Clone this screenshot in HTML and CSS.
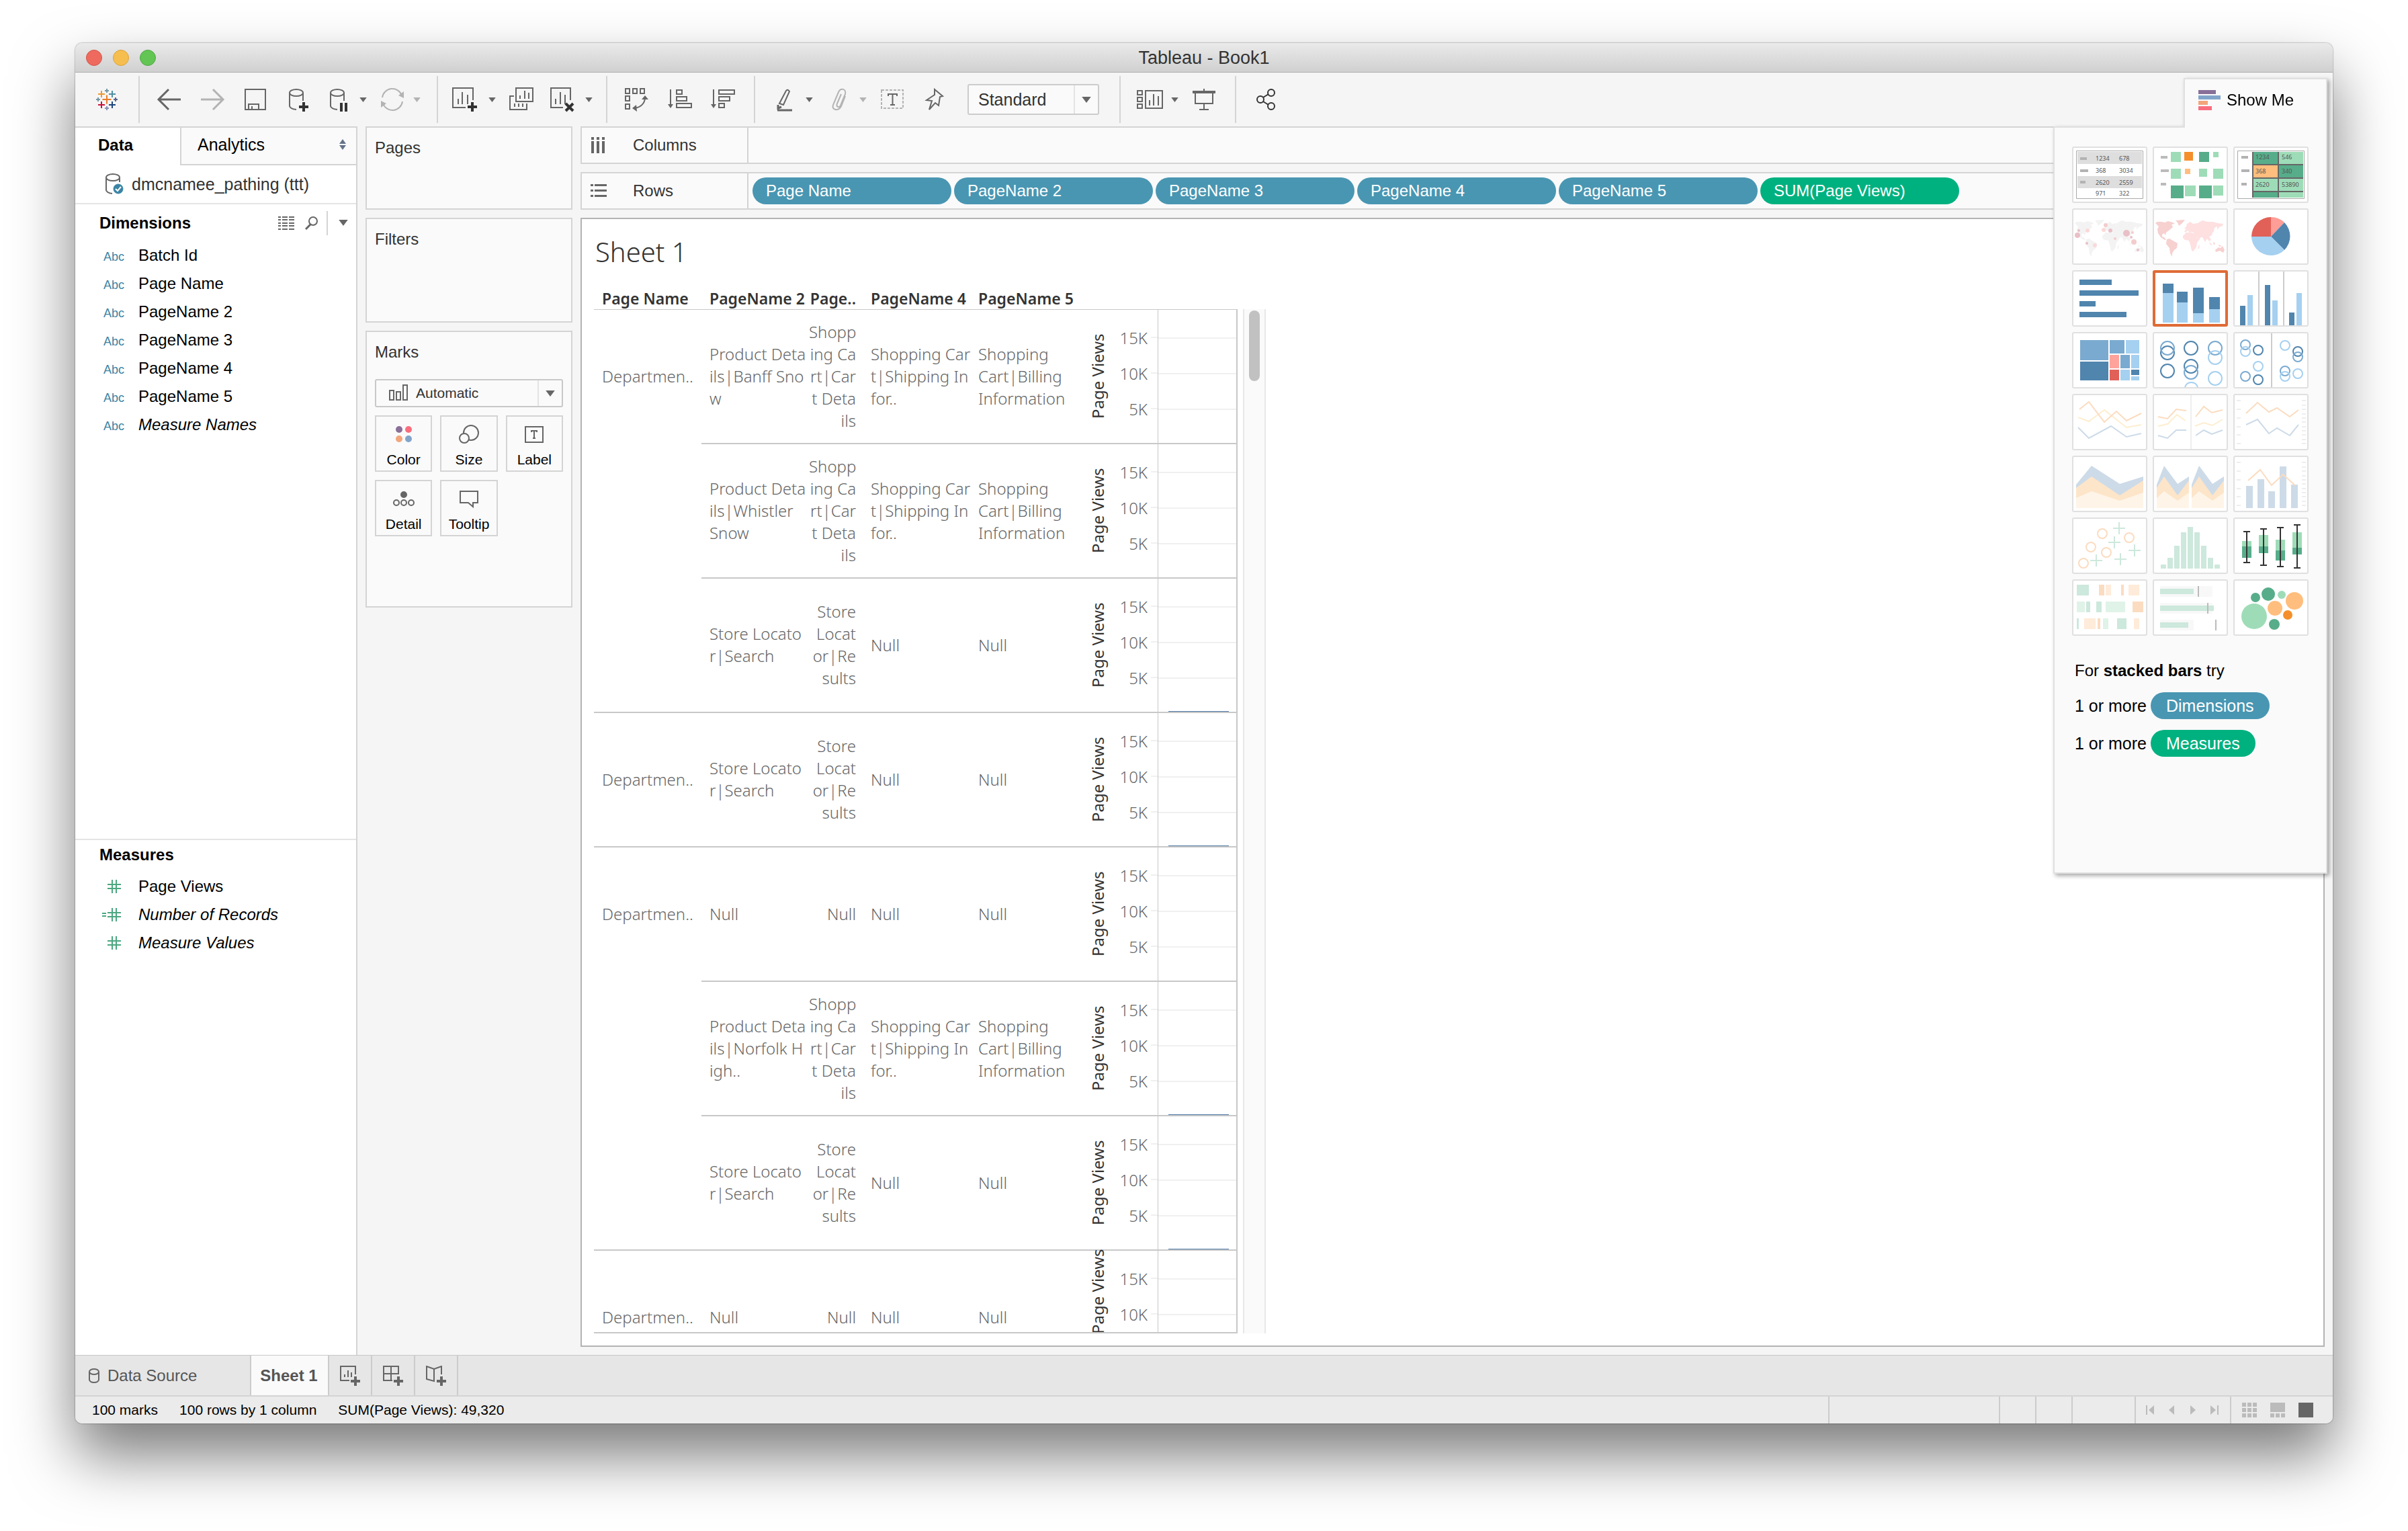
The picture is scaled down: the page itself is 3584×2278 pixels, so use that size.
FILE: index.html
```html
<!DOCTYPE html>
<html lang="en">
<head>
<meta charset="utf-8">
<title>Tableau - Book1</title>
<link rel="stylesheet" href="styles.css">
</head>
<body>
<svg class="defs" aria-hidden="true">
  <symbol id="caret" viewBox="0 0 12 8"><path d="M0 0H12L6 8Z" fill="currentColor"/></symbol>
  <symbol id="hash" viewBox="0 0 32 20"><path d="M19 0V20M25 0V20M12 7H32M12 13H32" stroke="#4aa77f" stroke-width="2" fill="none"/></symbol>
  <symbol id="world" viewBox="0 0 112 84">
    <path class="west" d="M4 22L7 20L13 20L18 21L23 19L30 21L33 23L28 24L30 28L24 33L20 36L19 40L17 37L14 39L14 42L17 43L20 47L18 47L12 43L8 37L7 31L9 27L6 24ZM34 18L48 17L44 22L39 26L37 21ZM21 46L25 45L30 48L37 52L36 59L32 62L29 67L29 72L26 67L25 59L20 53Z"/>
    <path class="east" d="M45 41L50 36L57 36L64 38L66 43L70 46L66 51L65 58L60 64L58 63L56 54L54 48L48 47L45 44ZM68 56L70 54L69 60L67 60ZM47 34L50 31L47 30L50 27L51 23L56 20L60 23L67 22L74 18L81 20L89 20L97 22L105 23L104 26L99 28L96 32L96 27L92 29L91 34L89 36L88 40L84 42L87 47L84 49L81 45L78 50L74 43L72 43L69 46L65 41L62 37L58 35L55 36L52 33L49 36Z"/>
    <path class="west" d="M84 50L89 55L86 54ZM90 50L93 52L91 55ZM97 54L103 56L100 57ZM93 62L98 58L101 59L104 56L107 62L105 66L100 63L94 65Z"/>
  </symbol>
  <symbol id="ticks" viewBox="0 0 112 84"><path stroke="#eee" stroke-width="2" d="M5 10h6M5 23h6M5 36h6M5 49h6M5 61h6M5 74h6M102 10h6M102 17h6M102 23h6M102 30h6M102 36h6M102 42h6M102 49h6M102 55h6M102 61h6M102 68h6M102 74h6"/></symbol>
</svg>

<div class="window">
  <header class="titlebar">
    <div class="lights"><button class="red" aria-label="Close"></button><button class="yellow" aria-label="Minimize"></button><button class="green" aria-label="Zoom"></button></div>
    <h1>Tableau - Book1</h1>
  </header>

  <div class="toolbar" role="toolbar">
    <div class="tools logo">
      <button aria-label="Start page"><svg class="icon" viewBox="0 0 40 40" fill="none" stroke-width="2"><path stroke="#eb7c29" d="M20 13.500V26.500M13.500 20H26.500"/><path stroke="#ec9a30" d="M12 7V17M7 12H17"/><path stroke="#4e8fa5" d="M28 7V17M23 12H33"/><path stroke="#c8123c" d="M12 23V33M7 28H17"/><path stroke="#1e447f" d="M28 23V33M23 28H33"/><path stroke="#7199a6" d="M20 4V10M17 7H23M7 17V23M4 20H10"/><path stroke="#5b6591" d="M33 17V23M30 20H36"/><path stroke="#8a8fb5" d="M20 30V36M17 33H23"/></svg></button>
    </div>
    <div class="tools g1">
      <button aria-label="Undo"><svg class="icon" viewBox="0 0 40 40"><path stroke-width="3" d="M19 5L4 20L19 35M4 20H37"/></svg></button>
      <button aria-label="Redo" class="off"><svg class="icon" viewBox="0 0 40 40"><path stroke-width="3" d="M21 5L36 20L21 35M36 20H3"/></svg></button>
      <button aria-label="Save"><svg class="icon" viewBox="0 0 40 40"><path d="M5 5H35V35H5ZM10 35V27H25V35M15 35V30"/></svg></button>
      <button aria-label="New data source"><svg class="icon" viewBox="0 0 40 40"><ellipse cx="17" cy="10" rx="10" ry="5"/><path d="M7 10V30Q8 34 17 35M27 10V22"/><path class="ink" d="M28 24V38M21 31H35"/></svg></button>
      <button aria-label="Pause auto updates" class="tight"><svg class="icon" viewBox="0 0 40 40"><ellipse cx="18" cy="10" rx="10" ry="5"/><path d="M8 10V30Q9 34 18 35M28 10V22"/><path class="ink" d="M24 25V38M31 25V38"/></svg></button>
      <button aria-label="Pause options" class="drop"><svg><use href="#caret"/></svg></button>
      <button aria-label="Refresh" class="tight off"><svg class="icon" viewBox="0 0 40 40"><path d="M5 17A15 15 0 0 1 34 14M35 23A15 15 0 0 1 6 26"/><path class="fill" d="M37 8V18L29 14ZM3 32V22L11 26Z"/></svg></button>
      <button aria-label="Refresh options" class="drop off"><svg><use href="#caret"/></svg></button>
    </div>
    <div class="tools g2">
      <button aria-label="New worksheet"><svg class="icon" viewBox="0 0 40 40"><path d="M21 32H2V3H32V21M10 19V27M16 9V27M24 13V27"/><path class="ink" d="M31 24V38M24 31H38"/></svg></button>
      <button aria-label="New worksheet options" class="drop"><svg><use href="#caret"/></svg></button>
      <button aria-label="Duplicate sheet" class="tight"><svg class="icon" viewBox="0 0 40 40"><path d="M12 3H37V23H12ZM18 14V19M25 7V19M31 10V19M9 15H3V35H28V26M10 26V31M16 26V31M22 26V31"/></svg></button>
      <button aria-label="Clear sheet"><svg class="icon" viewBox="0 0 40 40"><path d="M22 32H4V3H33V21M11 19V27M18 9V27M25 13V27"/><path class="ink" d="M26 26L37 37M37 26L26 37"/></svg></button>
      <button aria-label="Clear options" class="drop"><svg><use href="#caret"/></svg></button>
    </div>
    <div class="tools g3">
      <button aria-label="Swap rows and columns"><svg class="icon" viewBox="0 0 40 40"><path d="M3 4H9V11H3ZM14 4H20V11H14ZM25 4H31V11H25ZM3 15H9V22H3ZM3 27H9V34H3ZM32 18Q31 30 17 33"/><path class="fill" d="M27 20L32 14L37 20ZM19 28L13 33L20 38Z"/></svg></button>
      <button aria-label="Sort ascending"><svg class="icon" viewBox="0 0 40 40"><path d="M6 5V31M15 6H23V12H15ZM15 16H30V22H15ZM15 26H37V32H15Z"/><path class="fill" d="M2 27H10L6 33Z"/></svg></button>
      <button aria-label="Sort descending"><svg class="icon" viewBox="0 0 40 40"><path d="M6 5V31M14 6H37V12H14ZM14 16H30V22H14ZM14 26H22V32H14Z"/><path class="fill" d="M2 27H10L6 33Z"/></svg></button>
    </div>
    <div class="tools g4">
      <button aria-label="Highlight" class="tight"><svg class="icon" viewBox="0 0 40 40"><path d="M22 7Q24 4 27 8L18 28L12 26Z"/><path stroke-width="3" d="M9 36H31M10 28V33L15 31"/></svg></button>
      <button aria-label="Highlight options" class="drop"><svg><use href="#caret"/></svg></button>
      <button aria-label="Group members" class="tight off"><svg class="icon" viewBox="0 0 40 40"><path d="M30 15L24 30C20 38 9 36 12 28L20 9C23 2 32 4 30 12L23 29C21 33 16 31 18 26L24 12"/></svg></button>
      <button aria-label="Group options" class="drop off"><svg><use href="#caret"/></svg></button>
      <button aria-label="Show mark labels" class="tight"><svg class="icon" viewBox="0 0 40 40"><path stroke="#b3b3b3" stroke-dasharray="4 2" d="M4 6H36V33H4Z"/><path d="M14 15V12H27V15M20.500 12V28M17 28H24"/></svg></button>
      <button aria-label="Fix axes"><svg class="icon" viewBox="0 0 40 40"><path d="M23 5L35 15L31 16L29 29L24 25L15 35L19 22L11 21L23 13Z"/></svg></button>
      <div class="select fit"><select aria-label="Fit"><option>Standard</option></select><span class="chev"><svg><use href="#caret"/></svg></span></div>
    </div>
    <div class="tools g5">
      <button aria-label="Show or hide cards" class="tight"><svg class="icon" viewBox="0 0 40 40"><path d="M1 7H8V13H1ZM1 17H8V23H1ZM1 27H8V33H1ZM13 7H38V33H13ZM19 21V29M25 12V29M32 15V29"/></svg></button>
      <button aria-label="Card options" class="drop"><svg><use href="#caret"/></svg></button>
      <button aria-label="Presentation mode" class="tight"><svg class="icon" viewBox="0 0 40 40"><path stroke-width="4" d="M3 9H37"/><path d="M20 4V8M7 10V26H33V10M20 26V35M13 35H27"/></svg></button>
    </div>
    <div class="tools g6">
      <button aria-label="Share" class="tight"><svg class="icon dark" viewBox="0 0 40 40"><circle cx="12" cy="20" r="5"/><circle cx="28" cy="10" r="5"/><circle cx="28" cy="30" r="5"/><path d="M16 17L24 12M16 23L24 28"/></svg></button>
    </div>
  </div>

  <div class="work">
    <nav class="data-pane">
      <div class="pane-tabs"><button class="active">Data</button><button class="analytics">Analytics<svg viewBox="0 0 12 16"><path fill="#66738a" d="M1 7L6 0L11 7ZM1 9L6 16L11 9Z"/></svg></button></div>
      <div class="source"><svg viewBox="0 0 28 32" fill="none" stroke="#666" stroke-width="2"><ellipse cx="12" cy="6" rx="10" ry="5"/><path d="M2 6V25Q3 29 11 30M22 6V13"/><circle cx="20" cy="23" r="7" fill="#3a84a5" stroke="#3a84a5" stroke-width="1"/><path stroke="#fff" d="M16 23L19 26L24 20"/></svg><a href="#">dmcnamee_pathing (ttt)</a></div>
      <section class="dims">
        <div class="dims-head"><h2>Dimensions</h2>
          <button aria-label="View data"><svg width="26" height="20"><path stroke="#666" stroke-width="2" stroke-dasharray="4 2 8 2 8 2" d="M0 1H24M0 5H24M0 10H24M0 14H24M0 19H24"/></svg></button>
          <button aria-label="Find field"><svg width="20" height="20" fill="none" stroke="#666" stroke-width="2"><circle cx="12" cy="7" r="6"/><path stroke-width="3" d="M8 12L1 19"/></svg></button>
          <button aria-label="Options" class="more"><svg><use href="#caret"/></svg></button>
        </div>
        <ul class="fields">
          <li><span class="abc">Abc</span>Batch Id</li>
          <li><span class="abc">Abc</span>Page Name</li>
          <li><span class="abc">Abc</span>PageName 2</li>
          <li><span class="abc">Abc</span>PageName 3</li>
          <li><span class="abc">Abc</span>PageName 4</li>
          <li><span class="abc">Abc</span>PageName 5</li>
          <li class="auto"><span class="abc">Abc</span>Measure Names</li>
        </ul>
      </section>
      <section class="measures">
        <h2>Measures</h2>
        <ul class="fields">
          <li><svg class="num"><use href="#hash"/></svg>Page Views</li>
          <li class="auto"><svg class="num" viewBox="0 0 32 20"><path d="M4 8H10M4 12H10" stroke="#4aa77f" stroke-width="2"/><use href="#hash" width="32" height="20"/></svg>Number of Records</li>
          <li class="auto"><svg class="num"><use href="#hash"/></svg>Measure Values</li>
        </ul>
      </section>
    </nav>

    <div class="cards">
      <section class="card pages"><h2>Pages</h2></section>
      <section class="card filters"><h2>Filters</h2></section>
      <section class="card marks"><h2>Marks</h2>
        <div class="select mark-type"><svg class="bars" viewBox="0 0 28 24" fill="none" stroke="#666" stroke-width="2"><path d="M1 9H7V23H1ZM11 11H17V23H11ZM21 1H27V23H21Z"/></svg><select aria-label="Mark type"><option>Automatic</option></select><span class="chev"><svg><use href="#caret"/></svg></span></div>
        <div class="mark-grid">
          <button><svg viewBox="0 0 32 28"><circle cx="9" cy="7" r="5" fill="#8a6f98"/><circle cx="23" cy="7" r="5" fill="#f96e7e"/><circle cx="9" cy="21" r="5" fill="#f3a57c"/><circle cx="23" cy="21" r="5" fill="#82a4c9"/></svg>Color</button>
          <button><svg viewBox="0 0 32 28" fill="none" stroke="#666" stroke-width="2"><circle cx="19" cy="12" r="11"/><circle cx="9" cy="20" r="7" fill="#fafafa"/></svg>Size</button>
          <button><svg viewBox="0 0 32 28" fill="none" stroke="#666" stroke-width="2"><path d="M3 3H29V26H3ZM12 11V9H20V11M16 9V20M14 20H18"/></svg>Label</button>
          <button><svg viewBox="0 0 32 28" fill="none" stroke="#666" stroke-width="2"><circle cx="16" cy="8" r="4" fill="#666"/><circle cx="5" cy="20" r="4"/><circle cx="16" cy="20" r="4"/><circle cx="27" cy="20" r="4"/></svg>Detail</button>
          <button><svg viewBox="0 0 32 28" fill="none" stroke="#666" stroke-width="2"><path d="M3 3H29V20H22V26L15 20H3Z"/></svg>Tooltip</button>
        </div>
      </section>
    </div>

    <main class="main">
      <div class="shelf"><h2><svg width="22" height="24" fill="#666"><path d="M1 0h4v4H1ZM9 0h4v4H9ZM17 0h4v4H17ZM1 6h4v18H1ZM9 6h4v18H9ZM17 6h4v18H17Z"/></svg>Columns</h2></div>
      <div class="shelf"><h2><svg width="24" height="22" fill="#666"><path d="M0 1h4v3H0ZM0 9h4v3H0ZM0 17h4v3H0ZM6 1h18v3H6ZM6 9h18v3H6ZM6 17h18v3H6Z"/></svg>Rows</h2>
        <button class="pill">Page Name</button><button class="pill">PageName 2</button><button class="pill">PageName 3</button><button class="pill">PageName 4</button><button class="pill">PageName 5</button><button class="pill green">SUM(Page Views)</button>
      </div>
      <section class="sheet">
        <h2>Sheet 1</h2>
        <div class="view">
          <div class="clip">
          <table>
            <colgroup><col class="w160"><col class="w160"><col class="w80"><col class="w160"><col class="w160"><col class="w119"><col></colgroup>
            <thead><tr><th>Page Name</th><th>PageName 2</th><th class="r">Page..</th><th>PageName 4</th><th>PageName 5</th><th></th><th></th></tr></thead>
            <tbody>
              <tr><td>Departmen..</td><td>Product Deta<br>ils|Banff Sno<br>w</td><td class="r">Shopp<br>ing Ca<br>rt|Car<br>t Deta<br>ils</td><td>Shopping Car<br>t|Shipping In<br>for..</td><td>Shopping<br>Cart|Billing<br>Information</td><td class="ax"><div><b>Page Views</b><ul><li>15K</li><li>10K</li><li>5K</li></ul></div></td><td class="plot"><svg><path d="M0 42H117M0 95H117M0 148H117"/></svg></td></tr>
              <tr><td></td><td>Product Deta<br>ils|Whistler<br>Snow</td><td class="r">Shopp<br>ing Ca<br>rt|Car<br>t Deta<br>ils</td><td>Shopping Car<br>t|Shipping In<br>for..</td><td>Shopping<br>Cart|Billing<br>Information</td><td class="ax"><div><b>Page Views</b><ul><li>15K</li><li>10K</li><li>5K</li></ul></div></td><td class="plot"><svg><path d="M0 42H117M0 95H117M0 148H117"/></svg></td></tr>
              <tr class="end"><td></td><td>Store Locato<br>r|Search</td><td class="r">Store<br>Locat<br>or|Re<br>sults</td><td>Null</td><td>Null</td><td class="ax"><div><b>Page Views</b><ul><li>15K</li><li>10K</li><li>5K</li></ul></div></td><td class="plot"><svg><path d="M0 42H117M0 95H117M0 148H117"/><rect x="15" y="197" width="90" height="1"/></svg></td></tr>
              <tr class="end"><td>Departmen..</td><td>Store Locato<br>r|Search</td><td class="r">Store<br>Locat<br>or|Re<br>sults</td><td>Null</td><td>Null</td><td class="ax"><div><b>Page Views</b><ul><li>15K</li><li>10K</li><li>5K</li></ul></div></td><td class="plot"><svg><path d="M0 42H117M0 95H117M0 148H117"/><rect x="15" y="197" width="90" height="1"/></svg></td></tr>
              <tr><td>Departmen..</td><td>Null</td><td class="r">Null</td><td>Null</td><td>Null</td><td class="ax"><div><b>Page Views</b><ul><li>15K</li><li>10K</li><li>5K</li></ul></div></td><td class="plot"><svg><path d="M0 42H117M0 95H117M0 148H117"/></svg></td></tr>
              <tr><td></td><td>Product Deta<br>ils|Norfolk H<br>igh..</td><td class="r">Shopp<br>ing Ca<br>rt|Car<br>t Deta<br>ils</td><td>Shopping Car<br>t|Shipping In<br>for..</td><td>Shopping<br>Cart|Billing<br>Information</td><td class="ax"><div><b>Page Views</b><ul><li>15K</li><li>10K</li><li>5K</li></ul></div></td><td class="plot"><svg><path d="M0 42H117M0 95H117M0 148H117"/><rect x="15" y="197" width="90" height="1"/></svg></td></tr>
              <tr class="end"><td></td><td>Store Locato<br>r|Search</td><td class="r">Store<br>Locat<br>or|Re<br>sults</td><td>Null</td><td>Null</td><td class="ax"><div><b>Page Views</b><ul><li>15K</li><li>10K</li><li>5K</li></ul></div></td><td class="plot"><svg><path d="M0 42H117M0 95H117M0 148H117"/><rect x="15" y="197" width="90" height="1"/></svg></td></tr>
              <tr><td>Departmen..</td><td>Null</td><td class="r">Null</td><td>Null</td><td>Null</td><td class="ax partial"><div><b>Page Views</b><ul><li>15K</li><li>10K</li></ul></div></td><td class="plot"><svg><path d="M0 42H117M0 95H117M0 148H117"/></svg></td></tr>
            </tbody>
          </table>
          </div>
          <div class="scrollbar"><div class="thumb-bar"></div></div>
        </div>
      </section>
    </main>
  </div>

  <div class="sheet-tabs">
    <button class="ds"><svg width="16" height="24" fill="none" stroke="#666" stroke-width="2"><ellipse cx="8" cy="6" rx="7" ry="4"/><path d="M1 6V18Q2 22 8 22Q14 22 15 18V6"/></svg>Data Source</button>
    <button class="current">Sheet 1</button>
    <button class="new" aria-label="New worksheet"><svg viewBox="0 0 30 30"><path d="M14 22H1V1H23V13M7 13V17M12 7V17M17 10V17"/><path class="plus" d="M23 16V30M16 23H30"/></svg></button>
    <button class="new" aria-label="New dashboard"><svg viewBox="0 0 30 30"><path d="M14 22H1V1H23V13M12 1V22M1 12H23"/><path class="plus" d="M23 16V30M16 23H30"/></svg></button>
    <button class="new" aria-label="New story"><svg viewBox="0 0 30 30"><path d="M23 13V1L12 5L1 1V20L12 23V5"/><path class="plus" d="M23 16V30M16 23H30"/></svg></button>
  </div>
  <footer class="status">
    <span>100 marks</span><span>100 rows by 1 column</span><span>SUM(Page Views): 49,320</span>
    <div class="cell c1"></div><div class="cell c2"></div><div class="cell c2"></div><div class="cell c3"></div>
    <div class="cell nav">
      <button aria-label="First"><svg viewBox="0 0 12 14"><path d="M0 0H2V14H0ZM12 0V14L4 7Z"/></svg></button>
      <button aria-label="Previous"><svg viewBox="0 0 12 14"><path d="M10 0V14L2 7Z"/></svg></button>
      <button aria-label="Next"><svg viewBox="0 0 12 14"><path d="M2 0V14L10 7Z"/></svg></button>
      <button aria-label="Last"><svg viewBox="0 0 12 14"><path d="M12 0H10V14H12ZM0 0V14L8 7Z"/></svg></button>
    </div>
    <div class="cell modes">
      <button aria-label="Sheet sorter"><svg viewBox="0 0 22 22"><path d="M0 0h6v6H0ZM8 0h6v6H8ZM16 0h6v6H16ZM0 8h6v6H0ZM8 8h6v6H8ZM16 8h6v6H16ZM0 16h6v6H0ZM8 16h6v6H8ZM16 16h6v6H16Z"/></svg></button>
      <button aria-label="Filmstrip"><svg viewBox="0 0 22 22"><path d="M0 0H22V14H0ZM0 16h6v6H0ZM8 16h6v6H8ZM16 16h6v6H16Z"/></svg></button>
      <button aria-label="Tabs" class="on"><svg viewBox="0 0 22 22"><path d="M0 0H22V22H0Z"/></svg></button>
    </div>
  </footer>

  <aside class="showme">
    <button class="showme-tab"><svg width="34" height="30"><path fill="#886f98" d="M0 0h26v6H0Z"/><path fill="#82a4c9" d="M0 8h33v6H0Z"/><path fill="#f3a57c" d="M0 16h14v6H0Z"/><path fill="#f96e7e" d="M0 24h20v6H0Z"/></svg>Show Me</button>
    <div class="showme-body">
      <div class="thumbs">
        <button aria-label="Text table"><svg viewBox="0 0 112 84"><path fill="#fff" stroke="#aaa" d="M6.500 6.500H105.500V77.500H6.500Z"/><path fill="#dedede" d="M8 8H104V26H8ZM8 44H104V62H8Z"/><path fill="#b3b3b3" d="M12 16h10v4H12ZM12 34h12v4H12ZM12 51h8v4H12Z"/><g class="digits"><text x="35" y="21">1234</text><text x="70" y="21">678</text><text x="35" y="39">368</text><text x="70" y="39">3034</text><text x="35" y="57">2620</text><text x="70" y="57">2559</text><text x="35" y="73">971</text><text x="70" y="73">322</text></g></svg></button>
        <button aria-label="Heat map"><svg viewBox="0 0 112 84"><path fill="#bbb" d="M12 14h10v4H12ZM12 34h12v4H12ZM12 54h8v4H12Z"/><path class="lg" d="M27 8h15v15H27ZM90 8h8v8H90ZM27 33h15v15H27ZM69 33h12v12H69ZM90 33h15v15H90ZM48 58h16v16H48ZM90 58h15v15H90Z"/><path class="dg" d="M69 8h15v15H69ZM27 58h19v19H27ZM69 58h19v19H69Z"/><path class="do" d="M47 8h13v13H47Z"/><path class="lo" d="M48 33h8v8H48Z"/></svg></button>
        <button aria-label="Highlight table"><svg viewBox="0 0 112 84"><path fill="#fff" stroke="#aaa" d="M6.500 6.500H105.500V77.500H6.500Z"/><path fill="#b3b3b3" d="M12 14h10v4H12ZM12 34h12v4H12ZM12 54h8v4H12Z"/><path fill="#666" d="M28 8H104V76H28Z"/><path class="dg" d="M30 8H66V26H30ZM68 28H104V46H68ZM30 68H66V76H30Z"/><path class="lg" d="M68 8H104V26H68ZM30 48H66V66H30ZM68 48H104V66H68ZM68 68H104V76H68Z"/><path class="lo" d="M30 28H66V46H30Z"/><g class="digits"><text x="33" y="19">1234</text><text x="72" y="19">546</text><text x="33" y="40">368</text><text x="72" y="40">340</text><text x="33" y="60">2620</text><text x="72" y="60">53890</text></g></svg></button>
        <button aria-label="Symbol map"><svg viewBox="0 0 112 84" class="plain-map"><use href="#world"/><g fill="#fbd9d9"><circle cx="23" cy="33" r="3"/><circle cx="47" cy="32" r="3"/><circle cx="34" cy="55" r="3"/></g><g fill="#f4cccc"><circle cx="50" cy="25" r="3"/><circle cx="92" cy="50" r="4"/><circle cx="64" cy="45" r="2"/><circle cx="90" cy="36" r="2"/></g><g fill="#e9bfc8"><circle cx="10" cy="33" r="2"/><circle cx="8" cy="40" r="4"/><circle cx="57" cy="33" r="3"/><circle cx="81" cy="37" r="5"/><circle cx="88" cy="43" r="2"/><circle cx="22" cy="52" r="2"/><circle cx="98" cy="62" r="2"/></g></svg></button>
        <button aria-label="Filled map"><svg viewBox="0 0 112 84" class="pink-map"><use href="#world"/></svg></button>
        <button aria-label="Pie chart"><svg viewBox="0 0 112 84"><path fill="#e16158" d="M56 42H27A29 29 0 0 1 56 13Z"/><path fill="#ff9d97" d="M56 42V13A29 29 0 0 1 76 21Z"/><path class="db" d="M56 42L76 21A29 29 0 0 1 76 62Z"/><path class="lb" d="M56 42L76 62A29 29 0 0 1 27 42Z"/></svg></button>
        <button aria-label="Horizontal bars"><svg viewBox="0 0 112 84"><path class="db" d="M11 14h48v8H11ZM11 30h88v8H11ZM11 46h24v8H11ZM11 62h70v8H11Z"/></svg></button>
        <button aria-label="Stacked bars" class="selected"><svg viewBox="0 0 112 84"><path class="db" d="M15 20h16v14H15ZM36 32h16v16H36ZM60 26h16v38H60ZM84 40h16v18H84Z"/><path class="lb" d="M15 34h16v44H15ZM36 48h16v30H36ZM60 64h16v14H60ZM84 58h16v20H84Z"/></svg></button>
        <button aria-label="Side-by-side bars"><svg viewBox="0 0 112 84"><path fill="#ccc" d="M37 2h2v80h-2ZM74 2h2v80h-2Z"/><path class="db" d="M10 53h8v29h-8ZM47 22h8v60h-8ZM83 63h8v19h-8Z"/><path class="lb" d="M21 37h8v45h-8ZM58 45h8v37h-8ZM94 34h8v48h-8Z"/></svg></button>
        <button aria-label="Treemap"><svg viewBox="0 0 112 84"><path class="mb" d="M12 12H54V42H12ZM56 12H78V32H56ZM72 34H86V54H72Z"/><path class="db" d="M12 44H54V72H12ZM88 56H100V64H88Z"/><path class="lb" d="M80 12H100V32H80ZM88 34H100V54H88ZM72 56H86V72H72ZM88 66H100V72H88Z"/><path fill="#ffa39b" d="M56 34H70V54H56Z"/><path fill="#e16158" d="M56 56H70V72H56Z"/></svg></button>
        <button aria-label="Circle views"><svg viewBox="0 0 112 84" class="rings"><g class="sd"><circle cx="22" cy="31" r="10"/><circle cx="22" cy="58" r="10"/><circle cx="57" cy="24" r="10"/><circle cx="57" cy="51" r="10"/></g><g class="sm"><circle cx="22" cy="24" r="10"/><circle cx="57" cy="60" r="10"/><circle cx="93" cy="24" r="10"/></g><g class="sl"><circle cx="93" cy="38" r="10"/><circle cx="93" cy="69" r="10"/><path d="M48 82A10 10 0 0 1 67 82"/></g></svg></button>
        <button aria-label="Side-by-side circles"><svg viewBox="0 0 112 84" class="rings"><path stroke="#ccc" d="M57 2V82"/><g class="sd"><circle cx="37" cy="27" r="7"/><circle cx="37" cy="71" r="7"/><circle cx="96" cy="29" r="7"/></g><g class="sm"><circle cx="18" cy="19" r="7"/><circle cx="18" cy="66" r="7"/><circle cx="96" cy="37" r="7"/><circle cx="77" cy="58" r="7"/></g><g class="sl"><circle cx="18" cy="29" r="7"/><circle cx="37" cy="51" r="7"/><circle cx="77" cy="20" r="7"/><circle cx="77" cy="66" r="7"/><circle cx="96" cy="62" r="7"/></g></svg></button>
        <button aria-label="Lines continuous"><svg viewBox="0 0 112 84" class="lines"><path class="y" d="M9 35L25 41L48 24L81 50L103 46"/><path class="o" d="M11 23L25 12L48 42L66 26L81 40L103 29"/><path class="b" d="M9 50L25 66L58 48L81 64L103 59"/></svg></button>
        <button aria-label="Lines discrete"><svg viewBox="0 0 112 84" class="lines"><path stroke="#eee" d="M57 2V82"/><path class="y" d="M8 48L22 45L36 31L49 40M63 48L76 43L89 47L104 38"/><path class="o" d="M8 34L22 37L35 23L50 25M64 34L76 19L88 28L104 24"/><path class="b" d="M8 62L22 66L35 54H50M64 62L76 54L88 60L104 54"/></svg></button>
        <button aria-label="Dual lines"><svg viewBox="0 0 112 84" class="lines"><use href="#ticks"/><path class="o" d="M19 29L36 13L53 27L65 21L84 34L97 24"/><path class="b" d="M19 46L36 38L53 59L65 51L84 62L97 46"/></svg></button>
        <button aria-label="Area continuous"><svg viewBox="0 0 112 84"><path fill="#cddbe8" d="M6 43L29 15L71 42L106 31V78H6Z"/><path fill="#fde5ca" d="M6 48L29 31L71 59L106 37V78H6Z"/><path fill="#fef5e8" d="M6 63L29 53L71 67L106 55V78H6Z"/></svg></button>
        <button aria-label="Area discrete"><svg viewBox="0 0 112 84"><path fill="#cddbe8" d="M6 43L17 15L37 42L54 31V78H6ZM58 43L69 15L89 42L106 31V78H58Z"/><path fill="#fde5ca" d="M6 48L17 31L37 59L54 37V78H6ZM58 48L69 31L89 59L106 37V78H58Z"/><path fill="#fef5e8" d="M6 63L17 53L37 67L54 55V78H6ZM58 63L69 53L89 67L106 55V78H58Z"/></svg></button>
        <button aria-label="Dual combination"><svg viewBox="0 0 112 84" class="lines"><use href="#ticks"/><path fill="#cddbe8" d="M19 45h10v33H19ZM36 35h10v43H36ZM52 53h10v25H52ZM69 16h10v62H69ZM86 43h10v35H86Z"/><path class="o" d="M22 37L40 21L57 44L74 28L92 44"/></svg></button>
        <button aria-label="Scatter plot"><svg viewBox="0 0 112 84" class="lines"><g class="o"><circle cx="45" cy="24" r="7"/><circle cx="85" cy="30" r="7"/><circle cx="28" cy="44" r="7"/><circle cx="51" cy="52" r="7"/><circle cx="17" cy="68" r="7"/></g><path stroke="#cde8dc" d="M61 16H79M70 7V25M54 37H72M63 28V46M84 49H102M93 40V58M27 64H45M36 55V73M63 62H81M72 53V71"/></svg></button>
        <button aria-label="Histogram"><svg viewBox="0 0 112 84"><path class="pg" d="M12 70h8v6h-8ZM22 60h8v16h-8ZM32 42h8v34h-8ZM42 22h8v54h-8ZM52 14h8v62h-8ZM62 22h8v54h-8ZM72 42h8v34h-8ZM82 60h8v16h-8ZM92 70h8v6h-8Z"/></svg></button>
        <button aria-label="Box-and-whisker plot"><svg viewBox="0 0 112 84"><path class="lg" d="M13 35h14v8H13ZM38 26h14v17H38ZM63 33h14v16H63ZM88 22h14v23H88Z"/><path class="dg" d="M13 43h14v17H13ZM38 43h14v10H38ZM63 49h14v15H63ZM88 45h14v10H88Z"/><path stroke="#333" stroke-width="2" d="M20 21V67M15 21H25M15 67H25M45 17V71M40 17H50M40 71H50M70 15V73M65 15H75M65 73H75M95 11V75M90 11H100M90 75H100"/></svg></button>
        <button aria-label="Gantt"><svg viewBox="0 0 112 84"><path class="pg" d="M7 8h18v16H7ZM21 33h6v16h-6ZM36 33h8v16h-8ZM7 58h3v16H7ZM67 58h14v16H67Z"/><path fill="#e0f3e8" d="M7 33h12v16H7ZM50 33h29v16H50ZM46 58h8v16h-8Z"/><path fill="#fbdcc0" d="M40 8h8v16h-8ZM73 8h4v16h-4ZM90 33h16v16H90ZM38 58h4v16h-4Z"/><path fill="#ffebd9" d="M50 8h8v16h-8ZM84 8h16v16H84ZM18 58h17v16H18ZM92 58h8v16h-8Z"/></svg></button>
        <button aria-label="Bullet graph"><svg viewBox="0 0 112 84"><path fill="#f8f8f8" d="M11 10h78v16H11ZM11 35h78v16H11ZM11 60h50v16H11Z"/><path class="pg" d="M11 14h50v8H11ZM11 39h80v8H11ZM11 64h42v8H11Z"/><path fill="#bbb" d="M67 10h2v16h-2ZM81 35h2v16h-2ZM93 60h2v16h-2Z"/></svg></button>
        <button aria-label="Packed bubbles"><svg viewBox="0 0 112 84"><g class="lg"><circle cx="31" cy="55" r="19"/><circle cx="72" cy="23" r="6"/></g><g class="dg"><circle cx="33" cy="27" r="7"/><circle cx="52" cy="22" r="10"/><circle cx="61" cy="67" r="8"/></g><g class="lo"><circle cx="91" cy="32" r="13"/><circle cx="62" cy="43" r="11"/></g><circle class="do" cx="81" cy="53" r="7"/></svg></button>
      </div>
      <div class="hints">
        <p>For <strong>stacked bars</strong> try</p>
        <div>1 or more <span class="tag">Dimensions</span></div>
        <div>1 or more <span class="tag green">Measures</span></div>
      </div>
    </div>
  </aside>
</div>
</body>
</html>
```
FILE: styles.css
```css
* { box-sizing: border-box; }
body {
  margin: 0;
  padding: 64px 112px 160px;
  background: #fff;
  font: 24px/32px "Liberation Sans", Arial, sans-serif;
  color: #000;
}
h1, h2, p, ul { margin: 0; padding: 0; font: inherit; list-style: none; }
button, select { font: inherit; color: inherit; margin: 0; padding: 0; border: 0; background: none; }
svg { display: block; flex: none; }
.defs { position: absolute; width: 0; height: 0; }
a { color: inherit; text-decoration: none; }

.window {
  position: relative;
  display: flex;
  flex-direction: column;
  height: calc(100vh - 224px);
  background: #f5f5f5;
  border-radius: 10px;
  box-shadow: 0 0 2px rgba(0, 0, 0, .6), 0 48px 90px rgba(0, 0, 0, .52);
}

/* Title bar */
.titlebar {
  position: relative;
  display: flex;
  align-items: center;
  justify-content: center;
  height: 44px;
  border-bottom: 1px solid #adadad;
  border-radius: 10px 10px 0 0;
  background: linear-gradient(#eaeaea, #d0d0d0);
}
.titlebar h1 { font-size: 27px; color: #333; }
.lights { position: absolute; left: 16px; top: 10px; display: flex; gap: 16px; }
.lights button { width: 24px; height: 24px; border-radius: 50%; border: 1px solid; }
.lights .red { background: #ee6a5f; border-color: #d65548; }
.lights .yellow { background: #f6be4f; border-color: #dba43a; }
.lights .green { background: #62c554; border-color: #52a844; }

/* Toolbar */
.toolbar { display: flex; align-items: center; height: 80px; }
.tools { display: flex; align-items: center; height: 70px; border-right: 2px solid #d4d4d4; }
.tools > button { display: flex; align-items: center; justify-content: center; width: 64px; height: 48px; color: #666; }
.tools > .tight { width: 56px; }
.tools > .drop { width: 24px; justify-content: flex-start; padding-left: 3px; }
.tools > .off { color: #b3b3b3; }
.drop svg { width: 11px; height: 7px; }
.icon { width: 40px; height: 40px; fill: none; stroke: currentColor; stroke-width: 2; }
.icon .ink { stroke: #333; stroke-width: 4; }
.icon .fill { fill: currentColor; stroke: none; }
.icon.dark { color: #333; }
.logo { width: 96px; justify-content: center; }
.logo .icon { stroke: none; }
.g1 { padding: 0 14px 0 12px; }
.g2 { padding: 0 10px 0 8px; }
.g3 { padding: 0 14px 0 12px; }
.g4 { padding: 0 30px 0 16px; }
.g5 { padding: 0 18px 0 16px; }
.g6 { padding: 0 16px; border: 0; }

.select { display: flex; border: 2px solid #ccc; border-radius: 3px; background: #fafafa; color: #333; }
.select select { flex: 1; min-width: 0; appearance: none; }
.select .chev { display: flex; align-items: center; justify-content: center; width: 36px; border-left: 2px solid #e4e4e4; color: #666; }
.chev svg { width: 14px; height: 9px; }
.fit { width: 196px; height: 46px; margin-left: 20px; font-size: 25px; }
.fit select { padding-left: 14px; }

/* Work area */
.work { display: flex; flex: 1; min-height: 0; }
.data-pane {
  display: flex;
  flex-direction: column;
  width: 420px;
  border-top: 2px solid #d4d4d4;
  border-right: 2px solid #d4d4d4;
  background: #fff;
}
.pane-tabs { display: flex; height: 56px; }
.pane-tabs button { text-align: left; }
.pane-tabs .active { width: 156px; padding: 0 0 4px 34px; font-weight: bold; }
.pane-tabs .analytics {
  display: flex;
  flex: 1;
  align-items: center;
  justify-content: space-between;
  padding: 0 14px 4px 24px;
  border-left: 2px solid #d4d4d4;
  border-bottom: 2px solid #d4d4d4;
  background: #fafafa;
  font-size: 25px;
}
.analytics svg { width: 12px; height: 16px; }
.source { display: flex; align-items: center; gap: 12px; height: 58px; padding-left: 44px; border-bottom: 2px solid #e4e4e4; font-size: 25px; color: #333; }
.source svg { width: 28px; height: 32px; }
.data-pane h2 { font-weight: bold; }
.dims { flex: 1; }
.dims-head { display: flex; align-items: center; height: 55px; padding-left: 36px; gap: 14px; }
.dims-head h2 { flex: 1; }
.dims-head .more { display: flex; align-items: center; justify-content: center; width: 44px; height: 36px; margin-left: -2px; padding-left: 4px; border-left: 2px solid #d4d4d4; color: #666; }
.more svg { width: 14px; height: 9px; }
.fields li { display: flex; align-items: center; height: 42px; padding-left: 42px; }
.fields .abc { width: 52px; padding-top: 4px; font-size: 18px; font-style: normal; color: #3a84a5; }
.fields .num { width: 32px; height: 20px; margin-right: 26px; }
.fields .auto { font-style: italic; }
.measures { height: 768px; border-top: 2px solid #e4e4e4; }
.measures h2 { padding: 6px 0 10px 36px; }
.measures .fields li { padding-left: 36px; }

/* Cards */
.cards { display: flex; flex-direction: column; gap: 12px; width: 308px; margin: 0 12px; }
.card { border: 2px solid #d4d4d4; background: #fafafa; color: #333; padding: 14px 12px; }
.pages { height: 124px; }
.filters { height: 156px; }
.marks { height: 412px; }
.mark-type { height: 42px; margin: 24px 0 12px; font-size: 21px; border-color: #c8c8c8; }
.mark-type .bars { width: 28px; height: 24px; margin: 6px 12px 0 19px; }
.mark-grid { display: grid; grid-template-columns: repeat(3, 1fr); gap: 12px; }
.mark-grid button { display: flex; flex-direction: column; align-items: center; height: 84px; padding-top: 12px; border: 2px solid #d4d4d4; font-size: 21px; color: #000; line-height: 24px; gap: 12px; white-space: nowrap; }
.mark-grid svg { width: 32px; height: 28px; }

/* Shelves */
.main { display: flex; flex: 1; flex-direction: column; min-width: 0; padding: 0 12px 12px 0; }
.shelf { display: flex; align-items: center; gap: 4px; height: 56px; margin-bottom: 12px; border: 2px solid #d4d4d4; background: #fafafa; }
.shelf h2 { display: flex; align-items: center; width: 248px; height: 52px; padding-left: 13px; border-right: 2px solid #d4d4d4; color: #333; margin-right: 2px; }
.shelf h2 svg { width: 24px; margin-right: 39px; }
.pill { width: 296px; height: 40px; padding: 0 20px; border-radius: 20px; background: #4996b2; color: #fff; text-align: left; }
.green { background: #00b180; }

/* Sheet */
.sheet {
  display: flex;
  flex: 1;
  flex-direction: column;
  min-height: 0;
  padding: 22px 0 18px 18px;
  border: 2px solid #b3b3b3;
  background: #fff;
  font-family: "Noto Sans", "Open Sans", sans-serif;
  color: #666;
}
.sheet h2 { padding-left: 2px; font-size: 40px; line-height: 54px; font-weight: 300; color: #333; }
.view { display: flex; flex: 1; min-height: 0; gap: 8px; }
.clip { width: 958px; overflow: hidden; border-bottom: 2px solid #c8c8c8; }
table { width: 958px; table-layout: fixed; border-collapse: separate; border-spacing: 0; }
.w160 { width: 160px; }
.w80 { width: 80px; }
.w119 { width: 119px; }
th { height: 59px; padding: 0 0 0 12px; border-bottom: 1px solid #c8c8c8; vertical-align: bottom; text-align: left; font-size: 23px; font-weight: 600; color: #333; white-space: nowrap; }
td { height: 200px; padding: 0 0 2px 12px; border-bottom: 2px solid #c8c8c8; font-weight: 350; line-height: 33px; vertical-align: middle; white-space: nowrap; }
td:first-child { border-bottom-color: transparent; }
.end td:first-child { border-bottom-color: #c8c8c8; }
th.r { padding: 0 10px 0 0; text-align: right; }
td.r { padding: 0 10px 2px 0; text-align: right; }
.ax, .plot { padding: 0; }
.ax div { display: flex; justify-content: space-between; height: 198px; padding-left: 13px; }
.ax b { writing-mode: vertical-rl; transform: rotate(180deg); text-align: center; font-weight: 400; color: #333; }
.partial b { height: 124px; }
.ax ul { padding-top: 23px; }
.ax li { display: flex; align-items: center; justify-content: flex-end; gap: 5px; height: 36px; margin-bottom: 17px; }
.ax li::after { content: ""; width: 10px; height: 2px; background: #f0f0f0; }
.plot { border-left: 1px solid #c8c8c8; border-right: 2px solid #c8c8c8; }
.plot svg { width: 100%; height: 198px; stroke: #f0f0f0; stroke-width: 2; }
.plot rect { fill: #4e79a7; stroke: none; }
.scrollbar { width: 34px; margin-top: 58px; padding: 2px 8px; border: solid #e8e8e8; border-width: 0 2px; background: #fafafa; }
.thumb-bar { height: 105px; width: 16px; margin-left: -1px; border-radius: 8px; background: #c1c1c1; }

/* Sheet tabs */
.sheet-tabs { display: flex; height: 62px; border-top: 1px solid #c8c8c8; border-bottom: 2px solid #d4d4d4; background: #e6e6e6; color: #555; }
.sheet-tabs button { border-right: 2px solid #ccc; }
.sheet-tabs .ds { display: flex; align-items: center; gap: 12px; width: 262px; padding-left: 20px; }
.sheet-tabs .current { width: 116px; padding-right: 2px; background: #fafafa; font-weight: bold; }
.sheet-tabs .new { display: flex; align-items: center; justify-content: center; width: 64px; }
.new svg { width: 30px; height: 30px; fill: none; stroke: #666; stroke-width: 2; }
.new .plus { stroke-width: 4; }

/* Status bar */
.status { display: flex; align-items: center; height: 40px; padding-left: 25px; border-radius: 0 0 10px 10px; background: #ebebeb; font-size: 21px; }
.status span { margin-right: 32px; }
.cell { display: flex; align-items: center; height: 40px; border-left: 2px solid #ccc; }
.c1 { width: 254px; margin-left: auto; }
.c2 { width: 54px; }
.c3 { width: 94px; }
.nav { width: 142px; padding-left: 15px; gap: 20px; fill: #bbb; }
.nav svg { width: 12px; height: 14px; }
.modes { width: 153px; padding-left: 16px; gap: 20px; fill: #bbb; }
.modes svg { width: 22px; height: 22px; }
.modes .on { fill: #666; }

/* Show Me */
.showme { position: absolute; top: 52px; right: 8px; display: flex; flex-direction: column; width: 408px; filter: drop-shadow(3px 3px 3px rgba(0, 0, 0, .35)); }
.showme-tab { position: relative; display: flex; align-items: center; gap: 8px; align-self: flex-end; width: 214px; height: 74px; margin-bottom: -2px; padding: 0 0 10px 20px; border: 2px solid #e0e0e0; border-bottom: 0; background: #fafafa; }
.showme-body { padding: 28px 26px 172px; border: 2px solid #e0e0e0; background: #fafafa; }
.thumbs { display: grid; grid-template-columns: repeat(3, 112px); gap: 8px; }
.thumbs button { height: 84px; border: 2px solid #e0e0e0; border-radius: 3px; background: #fff; }
.thumbs svg { width: 112px; height: 84px; margin: -2px; }
.thumbs .selected { border: 4px solid #df6b37; }
.thumbs .selected svg { margin: -4px; }
.digits { font: 9px "Noto Sans", sans-serif; fill: #555; }
.lg { fill: #9edcb8; } .dg { fill: #57ad8a; } .lo { fill: #ffbe7d; } .do { fill: #f58f2b; }
.db { fill: #5085ae; } .mb { fill: #7aaad0; } .lb { fill: #a5d0f0; } .pg { fill: #cde8dc; }
.rings, .lines { fill: none; stroke-width: 2; }
.sd { stroke: #5085ae; } .sm { stroke: #7aaad0; } .sl { stroke: #a5d0f0; }
.lines .o { stroke: #fbdcc0; } .lines .y { stroke: #fdeecf; } .lines .b { stroke: #cddbe8; }
.plain-map { fill: #f3f3f3; }
.pink-map { --w: #f7d0d0; fill: #fee0e0; }
.west { fill: var(--w, #f3f3f3); }
.hints { display: flex; flex-direction: column; gap: 16px; margin-top: 36px; padding-left: 4px; }
.hints div { display: flex; align-items: center; gap: 6px; height: 40px; font-size: 25px; }
.tag { padding: 4px 23px; border-radius: 20px; background: #4996b2; color: #fff; }
.tag.green { background: #00b180; }
```
